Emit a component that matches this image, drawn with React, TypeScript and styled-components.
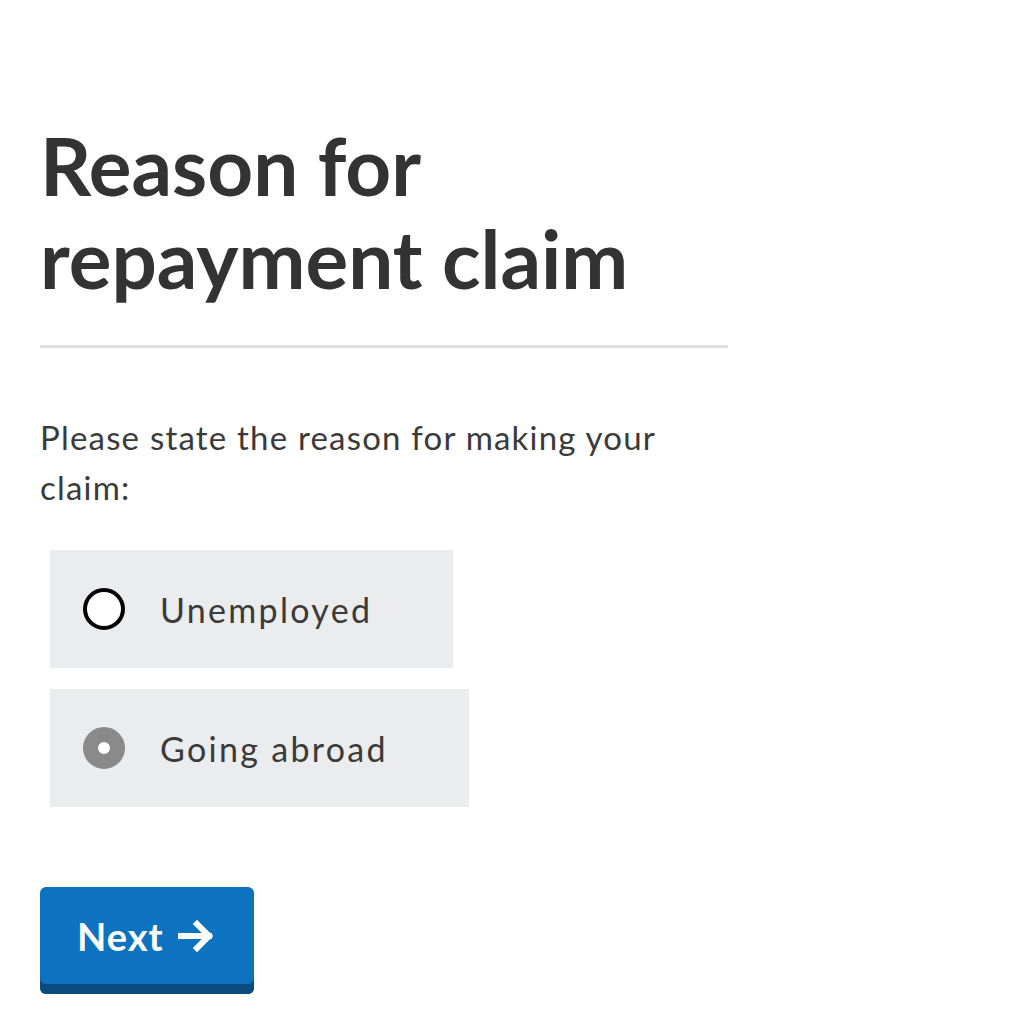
import { useState } from 'react'
import styled, { createGlobalStyle } from 'styled-components'

const GlobalStyle = createGlobalStyle`
  body {
    margin: 0;
    background: #ffffff;
    font-family: Lato, "Noto Sans", sans-serif;
    color: #333333;
  }
`

const Page = styled.main`
  width: 688px;
  padding: 119px 0 0 40px;
`

const Title = styled.h1`
  margin: 0;
  font-size: 80px;
  line-height: 93px;
  font-weight: 700;
  color: #333333;
`

const Rule = styled.hr`
  margin: 40px 0 0;
  border: none;
  height: 3px;
  background: #e1e1e1;
`

const Question = styled.p`
  margin: 64px 0 0;
  max-width: 660px;
  font-size: 33px;
  line-height: 50px;
  letter-spacing: 1.2px;
  color: #3a3a3a;
`

const Options = styled.div`
  display: flex;
  flex-direction: column;
  align-items: flex-start;
  gap: 21px;
  margin: 38px 0 0 10px;
`

const Option = styled.label`
  display: flex;
  align-items: center;
  gap: 35px;
  height: 118px;
  padding: 0 81px 0 33px;
  box-sizing: border-box;
  background: #ebecee;
  font-size: 34px;
  letter-spacing: 2.3px;
  color: #3a3a3a;
  cursor: pointer;
`

const Dot = styled.span<{ $checked: boolean }>`
  width: 42px;
  height: 42px;
  box-sizing: border-box;
  border-radius: 50%;
  border: ${p => (p.$checked ? '15px solid #8a8a8a' : '4px solid #000000')};
  background: #ffffff;
  flex-shrink: 0;
`

const NextButton = styled.button`
  margin-top: 80px;
  display: flex;
  align-items: center;
  gap: 14px;
  height: 107px;
  padding: 0 38px 10px 37px;
  border: none;
  border-radius: 6px;
  background: #0d72bf;
  box-shadow: inset 0 -10px 0 #0a4a7c;
  color: #ffffff;
  font-family: Lato, "Noto Sans", sans-serif;
  font-size: 38px;
  font-weight: 700;
  letter-spacing: 1px;
  cursor: pointer;
`

const options = ['Unemployed', 'Going abroad']

export default function App() {
  const [choice, setChoice] = useState('Going abroad')
  return (
    <>
      <GlobalStyle />
      <Page>
        <Title>Reason for<br />repayment claim</Title>
        <Rule />
        <Question>Please state the reason for making your claim:</Question>
        <Options>
          {options.map(o => (
            <Option key={o} onClick={() => setChoice(o)}>
              <Dot $checked={choice === o} />
              {o}
            </Option>
          ))}
        </Options>
        <NextButton>
          Next
          <svg width="38" height="34" viewBox="0 0 38 34" fill="none" stroke="#fff" strokeWidth="6" strokeLinecap="square">
            <path d="M3 17h28M19 5l12 12-12 12" />
          </svg>
        </NextButton>
      </Page>
    </>
  )
}
